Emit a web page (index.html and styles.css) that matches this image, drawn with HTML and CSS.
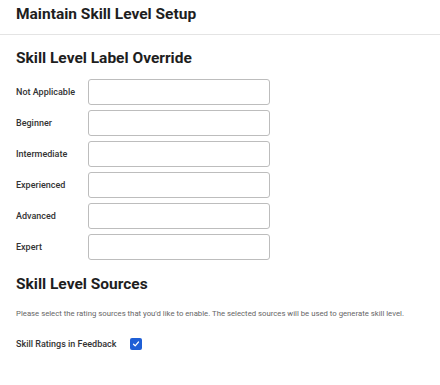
FILE: index.html
```html
<!DOCTYPE html>
<html lang="en">
<head>
    <meta charset="UTF-8">
    <meta name="viewport" content="width=device-width, initial-scale=1.0">
    <title>Maintain Skill Level Setup</title>
    <link rel="stylesheet" href="styles.css">
</head>
<body>
    <div class="page-header">
        <h1>Maintain Skill Level Setup</h1>
    </div>

    <div class="content">
        <h2>Skill Level Label Override</h2>
        <div class="label-grid">
            <label for="lvl0">Not Applicable</label>
            <input type="text" id="lvl0">
            <label for="lvl1">Beginner</label>
            <input type="text" id="lvl1">
            <label for="lvl2">Intermediate</label>
            <input type="text" id="lvl2">
            <label for="lvl3">Experienced</label>
            <input type="text" id="lvl3">
            <label for="lvl4">Advanced</label>
            <input type="text" id="lvl4">
            <label for="lvl5">Expert</label>
            <input type="text" id="lvl5">
        </div>

        <h2 class="sources-title">Skill Level Sources</h2>
        <p class="hint">Please select the rating sources that you'd like to enable. The selected sources will be used to generate skill level.</p>

        <div class="source-row">
            <span>Skill Ratings in Feedback</span>
            <span class="check">
                <svg width="8" height="8" viewBox="0 0 8 8"><path d="M1.5 4.2 L3.2 5.8 L6.5 2" fill="none" stroke="#fff" stroke-width="1.2" stroke-linecap="round" stroke-linejoin="round"/></svg>
            </span>
        </div>
    </div>
</body>
</html>
```

FILE: styles.css
```css
body {
    margin: 0;
    background-color: #fff;
    font-family: Roboto, "Liberation Sans", sans-serif;
    color: #1e1e1e;
}
.page-header {
    height: 34px;
    padding: 0 16px;
    border-bottom: 1px solid #e4e4e4;
    display: flex;
    align-items: center;
}
h1 {
    margin: 0 0 7px 0;
    font-size: 15.5px;
    font-weight: 700;
}
.content {
    padding: 0 16px;
}
h2 {
    margin: 13px 0 0 0;
    font-size: 15.5px;
    font-weight: 700;
    line-height: 20px;
}
.label-grid {
    display: grid;
    grid-template-columns: 72px 182px;
    grid-auto-rows: 26px;
    row-gap: 5px;
    margin-top: 11px;
    align-items: center;
}
.label-grid label {
    font-size: 9px;
    font-weight: 500;
    color: #333;
}
.label-grid input {
    box-sizing: border-box;
    height: 26px;
    width: 182px;
    margin: 0;
    border: 1px solid #bdbdbd;
    border-radius: 3px;
    background: #fff;
}
.sources-title {
    margin-top: 14px;
}
.hint {
    margin: 15px 0 0 0;
    font-size: 7.75px;
    color: #666;
}
.source-row {
    display: flex;
    align-items: center;
    gap: 14px;
    margin-top: 20px;
    font-size: 9px;
    font-weight: 500;
    color: #333;
}
.check {
    width: 12px;
    height: 12px;
    border-radius: 2px;
    background-color: #1f5fd6;
    display: flex;
    align-items: center;
    justify-content: center;
}
```
